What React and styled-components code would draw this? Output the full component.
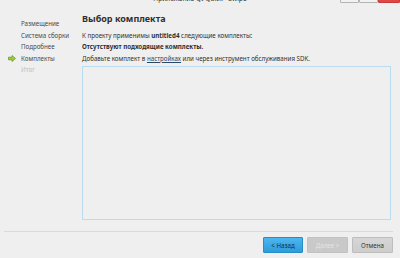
import React from "react";
import styled, { createGlobalStyle } from "styled-components";

const GlobalStyle = createGlobalStyle`
  html, body {
    margin: 0;
    padding: 0;
    background: #efefef;
  }
  body {
    font-family: "Noto Sans", "DejaVu Sans", sans-serif;
    color: #2f2f2f;
  }
`;

const Window = styled.div`
  width: 400px;
  height: 258px;
  display: flex;
  flex-direction: column;
  overflow: hidden;
  background: #efefef;
`;

const TitleBar = styled.div`
  height: 10px;
  flex: none;
  display: grid;
  grid-template-columns: 1fr auto 1fr;
  align-items: start;
  overflow: hidden;
`;

const TitleText = styled.div`
  grid-column: 2;
  font-size: 6.6px;
  line-height: 8px;
  margin-top: -5px;
  color: #333;
  white-space: nowrap;
`;

const WinButtons = styled.div`
  grid-column: 3;
  justify-self: end;
  display: flex;
  margin-top: -3px;
`;

const WinButton = styled.div`
  width: ${(p) => p.$w}px;
  height: 6px;
  box-sizing: border-box;
  border: 1px solid ${(p) => (p.$close ? "#c83a3a" : "#b4b4b4")};
  background: ${(p) => (p.$close ? "#e04848" : "#f2f2f2")};
  border-radius: 1px;
`;

const Main = styled.div`
  flex: 1;
  display: flex;
  min-height: 0;
`;

const Sidebar = styled.ul`
  list-style: none;
  margin: 0;
  padding: 8px 0 0 8px;
  width: 74px;
  flex: none;
`;

const Step = styled.li`
  display: flex;
  align-items: center;
  height: 11.5px;
  font-size: 6.2px;
  color: ${(p) => (p.$future ? "#bdbdbd" : "#4a4a4a")};
  white-space: nowrap;
`;

const StepIcon = styled.span`
  width: 13px;
  flex: none;
  display: flex;
  align-items: center;
`;

const Content = styled.div`
  flex: 1;
  display: flex;
  flex-direction: column;
  padding-right: 9px;
  min-width: 0;
`;

const Heading = styled.h1`
  margin: 2px 0 0;
  font-size: 9px;
  line-height: 14px;
  font-weight: bold;
  color: #2f2f2f;
`;

const Line = styled.p`
  margin: 0;
  font-size: 6.2px;
  line-height: 11.5px;
  font-weight: ${(p) => (p.$bold ? "bold" : "normal")};
  white-space: nowrap;
  &:first-of-type {
    margin-top: 3.5px;
  }
`;

const Link = styled.span`
  color: #2c4a66;
  text-decoration: underline;
`;

const KitList = styled.div`
  margin-top: 2px;
  height: 154px;
  box-sizing: border-box;
  border: 1px solid #b9dcef;
  background: #efefef;
`;

const Footer = styled.div`
  height: 27px;
  flex: none;
  display: flex;
  flex-direction: column;
`;

const Separator = styled.div`
  height: 1px;
  margin: 0 7px 0 4px;
  background: #d9d9d9;
`;

const ButtonRow = styled.div`
  display: flex;
  justify-content: flex-end;
  gap: 4px;
  padding: 5px 7px 0 0;
`;

const variants = {
  primary: {
    bg: "linear-gradient(#4cb6ee, #2c9ddb)",
    border: "#2a8cc4",
    color: "#1c2a36",
  },
  disabled: {
    bg: "#c9c9c9",
    border: "#c2c2c2",
    color: "#e4e4e4",
  },
  normal: {
    bg: "linear-gradient(#d6d6d6, #cdcdcd)",
    border: "#bdbdbd",
    color: "#333",
  },
};

const Button = styled.button`
  width: ${(p) => (p.$kind === "primary" ? 40 : 41)}px;
  height: 16px;
  padding: 0;
  box-sizing: border-box;
  border: 1px solid ${(p) => variants[p.$kind].border};
  border-radius: 1px;
  background: ${(p) => variants[p.$kind].bg};
  color: ${(p) => variants[p.$kind].color};
  font-family: inherit;
  font-size: 6.2px;
`;

const Arrow = () => (
  <svg width="8" height="7" viewBox="0 0 8 7">
    <path
      d="M0.5 2.2 H4 V0.5 L7.5 3.5 L4 6.5 V4.8 H0.5 Z"
      fill="#9ccc3c"
      stroke="#6b8f22"
      strokeWidth="0.7"
      strokeLinejoin="round"
    />
  </svg>
);

const steps = [
  { name: "Размещение" },
  { name: "Система сборки" },
  { name: "Подробнее" },
  { name: "Комплекты", current: true },
  { name: "Итог", future: true },
];

export default function App() {
  return (
    <>
      <GlobalStyle />
      <Window>
        <TitleBar>
          <TitleText>Приложение Qt Quick - Swipe</TitleText>
          <WinButtons>
            <WinButton $w={19} />
            <WinButton $w={19} />
            <WinButton $w={22} $close />
          </WinButtons>
        </TitleBar>
        <Main>
          <Sidebar>
            {steps.map((s) => (
              <Step key={s.name} $future={s.future}>
                <StepIcon>{s.current && <Arrow />}</StepIcon>
                {s.name}
              </Step>
            ))}
          </Sidebar>
          <Content>
            <Heading>Выбор комплекта</Heading>
            <Line>
              К проекту применимы <b>untitled4</b> следующие комплекты:
            </Line>
            <Line $bold>Отсутствуют подходящие комплекты.</Line>
            <Line>
              Добавьте комплект в <Link>настройках</Link> или через инструмент
              обслуживания SDK.
            </Line>
            <KitList />
          </Content>
        </Main>
        <Footer>
          <Separator />
          <ButtonRow>
            <Button $kind="primary">&lt; Назад</Button>
            <Button $kind="disabled">Далее &gt;</Button>
            <Button $kind="normal">Отмена</Button>
          </ButtonRow>
        </Footer>
      </Window>
    </>
  );
}
